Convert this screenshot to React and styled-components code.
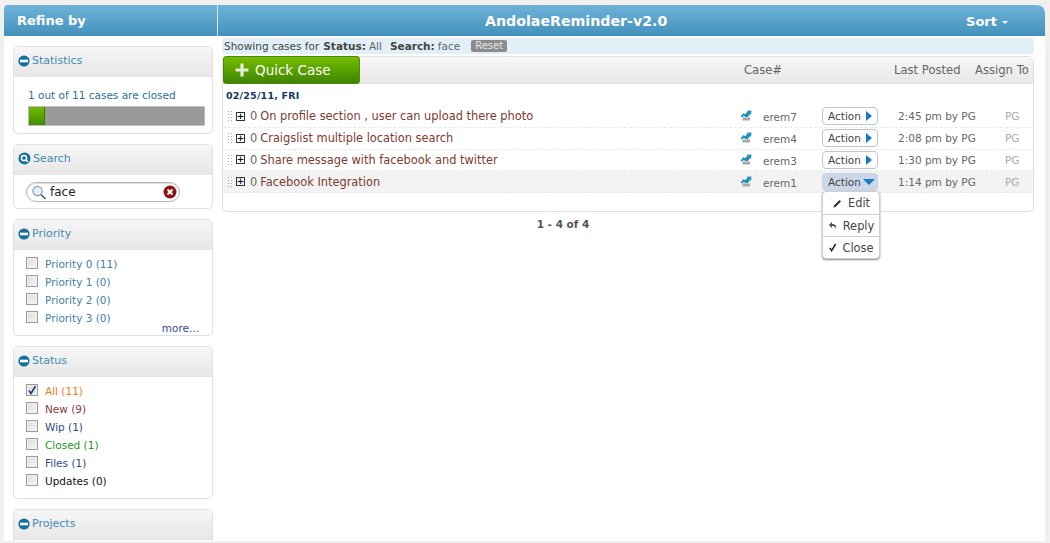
import styled, { createGlobalStyle } from "styled-components";

const GlobalStyle = createGlobalStyle`
  html, body { margin: 0; padding: 0; background: #f1f0ef; overflow: hidden; }
  * { box-sizing: border-box; }
  body { font-family: "DejaVu Sans", Verdana, sans-serif; font-size: 11px; }
`;

const Page = styled.div`
  height: 543px;
  padding: 5px 5px 2px 4px;
`;

const Shell = styled.div`
  height: 536px;
  background: #fff;
  overflow: hidden;
  border-radius: 4px 8px 0 0;
`;

const TopBar = styled.div`
  display: grid;
  grid-template-columns: 214px 1fr;
  height: 31px;
  background: linear-gradient(#6fb3d9, #4291bb);
  color: #fff;
  font-weight: bold;
`;

const RefineTitle = styled.div`
  display: flex;
  align-items: center;
  padding-left: 13px;
  font-size: 13px;
  border-right: 1px solid #d5e8f2;
`;

const AppTitle = styled.div`
  position: relative;
  display: flex;
  align-items: center;
  padding-left: 267px;
  font-size: 14.2px;
  white-space: nowrap;
`;

const SortMenu = styled.div`
  position: absolute;
  right: 37px;
  top: 9px;
  font-size: 13px;
  display: flex;
  align-items: center;
  gap: 5px;
  &::after {
    content: "";
    margin-top: 2px;
    border-left: 3px solid transparent;
    border-right: 3px solid transparent;
    border-top: 3px solid #fff;
  }
`;

const Columns = styled.div`
  display: grid;
  grid-template-columns: 218px 812px;
  column-gap: 0;
`;

const Sidebar = styled.div`
  display: flex;
  flex-direction: column;
  gap: 10px;
  padding: 10px 5px 0 9px;
  width: 214px;
`;

const Panel = styled.section`
  height: ${(p) => p.$height}px;
  border: 1px solid #e0e0e0;
  border-radius: 5px;
  overflow: hidden;
  flex: none;
`;

const PanelHead = styled.div`
  display: flex;
  align-items: center;
  gap: 2px;
  height: 30px;
  padding-left: 4px;
  padding-bottom: 2px;
  background: linear-gradient(#f6f6f6, #e7e7e7);
  border-bottom: 1px solid #e4e4e4;
  color: #3f8bb4;
  font-size: 11px;
`;

const StatBody = styled.div`
  padding: 11px 7px 0 14px;
  color: #2b6f98;
  font-size: 10.5px;
  line-height: 14px;
`;

const ProgressTrack = styled.div`
  margin-top: 4px;
  height: 20px;
  background: #999;
  border: 1px solid #bdbdbd;
`;

const ProgressFill = styled.div`
  height: 100%;
  background: linear-gradient(#70b900, #3f8f00);
  border-right: 1px solid #3a7a00;
`;

const SearchBody = styled.div`
  padding: 7px 32px 0 12px;
`;

const SearchBox = styled.div`
  display: flex;
  align-items: center;
  width: 154px;
  height: 20px;
  padding: 0 2px 0 4px;
  border: 1px solid #b5b5b5;
  border-radius: 10px;
  box-shadow: inset 0 1px 1px #ddd;
  font-size: 12px;
  color: #222;
`;

const SearchText = styled.span`
  flex: 1;
  padding-left: 3px;
`;

const CheckList = styled.div`
  padding: 4px 0 0 12px;
  display: flex;
  flex-direction: column;
`;

const CheckRow = styled.div`
  display: flex;
  align-items: flex-start;
  height: 18px;
  gap: 7px;
  font-size: 10.5px;
  line-height: 20px;
  color: ${(p) => p.$color};
`;

const CheckMark = styled.span`
  display: flex;
  align-items: center;
  justify-content: center;
  flex: none;
  width: 12px;
  height: 12px;
  margin-top: 3px;
  border: 1px solid #9a9a9a;
  background: linear-gradient(135deg, #dcdcdc, #f7f7f7);
  box-shadow: inset 0 0 0 1px #f2f2f2;
`;

const MoreLink = styled.div`
  text-align: right;
  padding-right: 13px;
  margin-top: -4px;
  color: #33489c;
  font-size: 10.5px;
`;

const Main = styled.div`
  display: flex;
  flex-direction: column;
  padding-top: 2px;
`;

const FilterBar = styled.div`
  display: flex;
  align-items: center;
  height: 16px;
  padding-left: 2px;
  background: #e1eff6;
  border-radius: 3px;
  color: #444;
  font-size: 10.5px;
  white-space: nowrap;
  b { margin: 0 3px 0 4px; }
  i { font-style: normal; color: #666; margin-right: 4px; }
`;

const ResetChip = styled.span`
  padding: 0 4px;
  height: 12px;
  line-height: 12px;
  margin-left: 7px;
  background: #8c8c8c;
  color: #e8e8e8;
  font-size: 10px;
  border-radius: 2px;
`;

const CaseCard = styled.div`
  margin-top: 2px;
  height: 156px;
  border: 1px solid #e0e0e0;
  border-radius: 5px;
`;

const CaseToolbar = styled.div`
  display: flex;
  align-items: center;
  height: 27px;
  background: linear-gradient(#f6f6f6, #e8e8e8);
  border-bottom: 1px solid #e2e2e2;
  color: #666;
  font-size: 11.6px;
`;

const QuickButton = styled.div`
  display: flex;
  align-items: center;
  gap: 6px;
  width: 137px;
  height: 28px;
  margin-bottom: 1px;
  padding-left: 11px;
  background: linear-gradient(#76bd00, #3e8500);
  border: 1px solid #4a8a10;
  border-radius: 3px;
  color: #fff;
  font-size: 13.5px;
`;

const ColCase = styled.span`
  margin-left: 384px;
  width: 150px;
`;

const ColPosted = styled.span`
  width: 81px;
`;

const DateLine = styled.div`
  height: 22px;
  padding: 6px 0 0 3px;
  font-size: 9.5px;
  font-weight: bold;
  color: #12365e;
  letter-spacing: 0.2px;
`;

const CaseRow = styled.div`
  position: relative;
  display: grid;
  grid-template-columns: 23px 490px 23px 59px 76px 107px 1fr;
  align-items: center;
  height: 21.8px;
  padding-left: 4px;
  border-bottom: 1px dashed #e8e8e8;
  background: ${(p) => (p.$active ? "#f3f3f3" : "transparent")};
`;

const RowHandle = styled.div`
  display: flex;
  align-items: center;
  gap: 3px;
  &::before {
    content: "";
    width: 6px;
    height: 12px;
    background-image: radial-gradient(#a8a8a8 1px, transparent 1px);
    background-size: 3px 3px;
  }
`;

const ExpandBox = styled.span`
  display: flex;
  align-items: center;
  justify-content: center;
  width: 9px;
  height: 9px;
  border: 1px solid #333;
  font-size: 9px;
  line-height: 1;
  font-weight: bold;
  color: #111;
`;

const CaseTitle = styled.div`
  font-size: 11.4px;
  color: #7f3a32;
  white-space: nowrap;
  span { color: #666; margin-right: 3px; }
`;

const CaseId = styled.div`
  padding-top: 2px;
  color: #666;
  font-size: 10.5px;
`;

const ActionButton = styled.div`
  display: flex;
  align-items: center;
  justify-content: space-between;
  width: 56px;
  height: 18px;
  padding: 0 ${(p) => (p.$open ? "2px" : "5px")} 0 5px;
  border: 1px solid ${(p) => (p.$open ? "#c9d5e6" : "#bcc6d2")};
  border-radius: 4px;
  background: ${(p) => (p.$open ? "#cbd7e9" : "#fff")};
  color: #444;
  font-size: 10.5px;
`;

const ArrowRight = styled.span`
  border-top: 5px solid transparent;
  border-bottom: 5px solid transparent;
  border-left: 6px solid #1b78c8;
`;

const ArrowDown = styled.span`
  border-left: 6px solid transparent;
  border-right: 6px solid transparent;
  border-top: 6px solid #1b78c8;
`;

const PostedCell = styled.div`
  padding-left: 0;
  color: #666;
  font-size: 10.5px;
`;

const AssignCell = styled.div`
  color: #aaa;
  font-size: 10.5px;
`;

const DropMenu = styled.div`
  position: absolute;
  z-index: 2;
  left: 599px;
  top: 20px;
  width: 58px;
  background: #fff;
  border: 1px solid #d0d0d0;
  border-radius: 4px;
  box-shadow: 0 1px 2px #888;
`;

const DropItem = styled.div`
  display: flex;
  align-items: center;
  justify-content: center;
  gap: 5px;
  height: 22px;
  color: #444;
  font-size: 11.4px;
  & + & { border-top: 1px solid #c6d3e6; }
`;

const Pager = styled.div`
  margin-top: 6px;
  text-align: center;
  padding-right: 130px;
  font-size: 10.5px;
  font-weight: bold;
  color: #555;
`;

function MinusIcon() {
  return (
    <svg width="12" height="12" viewBox="0 0 12 12">
      <circle cx="6" cy="6" r="5.6" fill="#15709f" />
      <rect x="2" y="4.7" width="8" height="2.6" fill="#fff" />
    </svg>
  );
}

function SearchDot() {
  return (
    <svg width="13" height="13" viewBox="0 0 13 13">
      <circle cx="6.5" cy="6.5" r="6" fill="#15709f" />
      <circle cx="6" cy="6" r="2.6" fill="none" stroke="#fff" strokeWidth="1.5" />
      <path d="M8 8 L10 10" stroke="#fff" strokeWidth="1.6" />
    </svg>
  );
}

function Magnifier() {
  return (
    <svg width="16" height="15" viewBox="0 0 16 15">
      <circle cx="6.5" cy="6" r="4.6" fill="#e6effa" stroke="#8aa0bb" strokeWidth="1.2" />
      <path d="M10 9.5 L14.5 14" stroke="#555" strokeWidth="1.6" />
    </svg>
  );
}

function ClearIcon() {
  return (
    <svg width="14" height="14" viewBox="0 0 14 14">
      <circle cx="7" cy="7" r="6.5" fill="#8e1010" />
      <path d="M4.5 4.5 L9.5 9.5 M9.5 4.5 L4.5 9.5" stroke="#fff" strokeWidth="2" />
    </svg>
  );
}

function TickIcon({ color = "#34396f", size = 10 }) {
  return (
    <svg width={size} height={size} viewBox="0 0 10 10">
      <path d="M2 5.5 L4 8.5 L8.5 1" fill="none" stroke={color} strokeWidth="1.7" />
    </svg>
  );
}

function PlusIcon() {
  return (
    <svg width="14" height="14" viewBox="0 0 13 13">
      <path d="M5 0.5h3v4.5h4.5v3H8v4.5H5V8H0.500V5H5z" fill="#e6eedc" />
    </svg>
  );
}

function CaseTypeIcon() {
  return (
    <svg width="12" height="12" viewBox="0 0 12 12">
      <path d="M2.500 7.500 H10 V10.500 H2.500 Z" fill="#a8a8a8" />
      <path d="M0.500 6.500 L3.500 3 L5 4.200 L7.500 1.500 L6.500 0.800 L11.500 0.500 L11 5 L10 4 L8 7 H5 L4 5.500 L2.500 7.500 Z" fill="#1c93b8" />
    </svg>
  );
}

function PencilIcon() {
  return (
    <svg width="11" height="11" viewBox="0 0 11 11">
      <path d="M1.500 9.500 L2 7.500 L7.500 2 L9 3.500 L3.500 9 Z" fill="#333" />
    </svg>
  );
}

function ReplyIcon() {
  return (
    <svg width="10" height="10" viewBox="0 0 10 10">
      <path d="M4 1 L0.800 4 L4 7 V5 C6.500 5 7.500 6 8 8 C9 4.500 7 3 4 3 Z" fill="#555" />
    </svg>
  );
}

const priorities = ["Priority 0 (11)", "Priority 1 (0)", "Priority 2 (0)", "Priority 3 (0)"];

const statuses = [
  { label: "All (11)", color: "#f07a22", checked: true },
  { label: "New (9)", color: "#8d3a3a" },
  { label: "Wip (1)", color: "#2d4a8a" },
  { label: "Closed (1)", color: "#169a16" },
  { label: "Files (1)", color: "#2d4a8a" },
  { label: "Updates (0)", color: "#111" },
];

const cases = [
  { title: "On profile section , user can upload there photo", id: "erem7", time: "2:45 pm by PG" },
  { title: "Craigslist multiple location search", id: "erem4", time: "2:08 pm by PG" },
  { title: "Share message with facebook and twitter", id: "erem3", time: "1:30 pm by PG" },
  { title: "Facebook Integration", id: "erem1", time: "1:14 pm by PG", open: true },
];

export default function App() {
  return (
    <Page>
      <GlobalStyle />
      <Shell>
        <TopBar>
          <RefineTitle>Refine by</RefineTitle>
          <AppTitle>
            AndolaeReminder-v2.0
            <SortMenu>Sort</SortMenu>
          </AppTitle>
        </TopBar>
        <Columns>
          <Sidebar>
            <Panel $height={88}>
              <PanelHead><MinusIcon /> Statistics</PanelHead>
              <StatBody>
                1 out of 11 cases are closed
                <ProgressTrack>
                  <ProgressFill style={{ width: `${(1 / 11) * 100}%` }} />
                </ProgressTrack>
              </StatBody>
            </Panel>
            <Panel $height={65}>
              <PanelHead><SearchDot /> Search</PanelHead>
              <SearchBody>
                <SearchBox>
                  <Magnifier />
                  <SearchText>face</SearchText>
                  <ClearIcon />
                </SearchBox>
              </SearchBody>
            </Panel>
            <Panel $height={117}>
              <PanelHead><MinusIcon /> Priority</PanelHead>
              <CheckList>
                {priorities.map((p) => (
                  <CheckRow key={p} $color="#3f7fa8">
                    <CheckMark />
                    {p}
                  </CheckRow>
                ))}
              </CheckList>
              <MoreLink>more...</MoreLink>
            </Panel>
            <Panel $height={153}>
              <PanelHead><MinusIcon /> Status</PanelHead>
              <CheckList>
                {statuses.map((s) => (
                  <CheckRow key={s.label} $color={s.color}>
                    <CheckMark>{s.checked && <TickIcon />}</CheckMark>
                    {s.label}
                  </CheckRow>
                ))}
              </CheckList>
            </Panel>
            <Panel $height={60}>
              <PanelHead><MinusIcon /> Projects</PanelHead>
            </Panel>
          </Sidebar>
          <Main>
            <FilterBar>
              Showing cases for <b>Status:</b> <i>All</i> <b>Search:</b> <i>face</i>
              <ResetChip>Reset</ResetChip>
            </FilterBar>
            <CaseCard>
              <CaseToolbar>
                <QuickButton><PlusIcon /> Quick Case</QuickButton>
                <ColCase>Case#</ColCase>
                <ColPosted>Last Posted</ColPosted>
                <span>Assign To</span>
              </CaseToolbar>
              <DateLine>02/25/11, FRI</DateLine>
              {cases.map((c) => (
                <CaseRow key={c.id} $active={c.open}>
                  <RowHandle><ExpandBox>+</ExpandBox></RowHandle>
                  <CaseTitle><span>0</span>{c.title}</CaseTitle>
                  <CaseTypeIcon />
                  <CaseId>{c.id}</CaseId>
                  <ActionButton $open={c.open}>
                    Action {c.open ? <ArrowDown /> : <ArrowRight />}
                  </ActionButton>
                  <PostedCell>{c.time}</PostedCell>
                  <AssignCell>PG</AssignCell>
                  {c.open && (
                    <DropMenu>
                      <DropItem><PencilIcon /> Edit</DropItem>
                      <DropItem><ReplyIcon /> Reply</DropItem>
                      <DropItem><TickIcon color="#222" size={9} /> Close</DropItem>
                    </DropMenu>
                  )}
                </CaseRow>
              ))}
            </CaseCard>
            <Pager>1 - 4 of 4</Pager>
          </Main>
        </Columns>
      </Shell>
    </Page>
  );
}
